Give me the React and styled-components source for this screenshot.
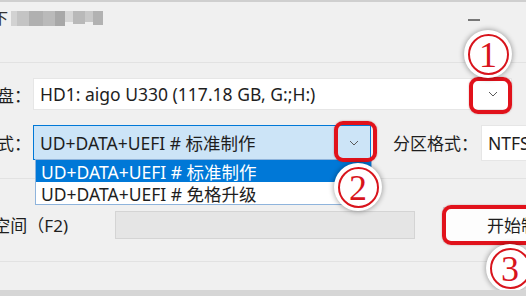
import React from "react";
import styled, { createGlobalStyle } from "styled-components";

const GlobalStyle = createGlobalStyle`
  html, body { margin: 0; padding: 0; background: #f0f0f0; }
  body { font-family: "Noto Sans", "Noto Sans CJK SC", sans-serif; color: #1e1e1e; }
  * { box-sizing: border-box; }
`;

const Window = styled.div`
  position: relative;
  width: 526px;
  height: 296px;
  overflow: hidden;
  background: #f0f0f0;
  border-top: 2px solid #cfcfcf;
  border-bottom: 6px solid #d6d6d6;
  display: flex;
  flex-direction: column;
`;

const TitleBar = styled.div`
  height: 61px;
  flex: none;
  display: flex;
  align-items: flex-start;
  padding-top: 5px;
  border-bottom: 1px solid #e2e2e2;
`;

const TitleText = styled.span`
  font-size: 15px;
  margin-left: -7px;
  color: #333;
`;

const Mosaic = styled.div`
  display: flex;
  align-items: flex-start;
  margin: 4px 0 0 3px;
  filter: blur(0.6px);
`;

const Cell = styled.span`
  width: ${p => p.$w}px;
  height: ${p => p.$h || 15}px;
  background: ${p => p.$c};
`;

const Minimize = styled.span`
  margin: 12px 46px 0 auto;
  width: 12px;
  height: 2px;
  background: #777;
`;

const Section = styled.div`
  padding: ${p => p.$pad};
  border-bottom: 1px solid #e2e2e2;
  display: flex;
  flex-direction: column;
  gap: ${p => p.$gap || 0}px;
`;

const Row = styled.div`
  display: flex;
  align-items: center;
  height: ${p => p.$h}px;
`;

const Label = styled.div`
  width: ${p => p.$w}px;
  flex: none;
  display: flex;
  justify-content: flex-end;
  white-space: nowrap;
  font-size: 17px;
  margin-right: ${p => p.$gap || 2}px;
  margin-left: ${p => p.$left || 0}px;
`;

const Combo = styled.div`
  position: relative;
  flex: none;
  width: ${p => p.$w}px;
  height: ${p => p.$h}px;
  display: flex;
  align-items: center;
  padding-left: 6px;
  font-size: 17.5px;
  white-space: nowrap;
  background: ${p => (p.$active ? "#cce4f7" : "#fff")};
  border: 1px solid ${p => (p.$active ? "#0078d7" : "#e6e6e6")};
`;

const Value = styled.span`
  flex: 1;
  overflow: hidden;
`;

const ChevronBox = styled.span`
  position: relative;
  width: ${p => p.$w}px;
  align-self: stretch;
  display: flex;
  align-items: center;
  justify-content: center;
  flex: none;
`;

const RedFrame = styled.span`
  position: absolute;
  top: ${p => p.$t}px;
  right: ${p => p.$r}px;
  bottom: ${p => p.$b}px;
  left: ${p => p.$l}px;
  border: 4px solid #e1121b;
  border-radius: 9px;
  box-shadow: 0 0 2px rgba(120, 0, 0, 0.35);
  pointer-events: none;
  z-index: 3;
`;

const DropList = styled.div`
  position: absolute;
  top: 100%;
  left: 1px;
  width: 337px;
  background: #fff;
  border: 1px solid #8fb4dc;
  z-index: 2;
`;

const Option = styled.div`
  height: 22px;
  display: flex;
  align-items: center;
  padding-left: 5px;
  font-size: 17.5px;
  background: ${p => (p.$selected ? "#0078d7" : "#fff")};
  color: ${p => (p.$selected ? "#fff" : "#1e1e1e")};
`;

const Disabled = styled.div`
  width: 300px;
  height: 28px;
  flex: none;
  background: #e5e5e5;
  border: 1px solid #d4d4d4;
  margin-right: 28px;
`;

const Button = styled.div`
  position: relative;
  flex: none;
  width: 156px;
  height: 35px;
  display: flex;
  align-items: center;
  justify-content: center;
  font-size: 17px;
  background: #fdfdfd;
  border: 1px solid #d0d0d0;
`;

const Badge = styled.div`
  position: absolute;
  left: ${p => p.$x - 24}px;
  top: ${p => p.$y - 24}px;
  width: 48px;
  height: 48px;
  border-radius: 50%;
  background: #fff;
  box-shadow: 0 0 5px 1px rgba(0, 0, 0, 0.3);
  display: flex;
  align-items: center;
  justify-content: center;
  z-index: 4;
`;

const Ring = styled.span`
  width: 41px;
  height: 41px;
  border-radius: 50%;
  border: 2px solid #d8141c;
  display: flex;
  align-items: center;
  justify-content: center;
  font-family: "Liberation Serif", serif;
  font-size: 36px;
  line-height: 1;
  color: #d8141c;
  padding-top: 2px;
`;

const Chevron = () => (
  <svg width="10" height="6" viewBox="0 0 10 6">
    <polyline points="1,1 5,5 9,1" fill="none" stroke="#5a5a5a" strokeWidth="1" />
  </svg>
);

const mosaic = [
  { w: 6, c: "#d2d2d2" },
  { w: 12, c: "#c4c4c4" },
  { w: 14, c: "#b0b0b0" },
  { w: 12, c: "#bababa" },
  { w: 10, c: "#a8a8a8" },
  { w: 8, c: "#d6d6d6", h: 11 },
  { w: 12, c: "#b9b9b9", h: 13 },
  { w: 8, c: "#c8c8c8", h: 11 },
  { w: 10, c: "#b2b2b2", h: 14 },
];

export default function App() {
  return (
    <>
      <GlobalStyle />
      <Window>
        <TitleBar>
          <TitleText>下</TitleText>
          <Mosaic>
            {mosaic.map((m, i) => (
              <Cell key={i} $w={m.w} $h={m.h} $c={m.c} />
            ))}
          </Mosaic>
          <Minimize />
        </TitleBar>

        <Section $pad="15px 0 17px" $gap={14}>
          <Row $h={32}>
            <Label $w={31}>U盘：</Label>
            <Combo $w={479} $h={32}>
              <Value>HD1: aigo U330 (117.18 GB, G:;H:)</Value>
              <ChevronBox $w={36}>
                <Chevron />
                <RedFrame $t={-2} $r={-1} $b={-5} $l={-6} />
              </ChevronBox>
            </Combo>
          </Row>
          <Row $h={37}>
            <Label $w={31}>模式：</Label>
            <Combo $w={338} $h={35} $active>
              <Value>UD+DATA+UEFI # 标准制作</Value>
              <ChevronBox $w={33}>
                <Chevron />
                <RedFrame $t={-5} $r={-7} $b={-3} $l={-3} />
              </ChevronBox>
              <DropList>
                <Option $selected>UD+DATA+UEFI # 标准制作</Option>
                <Option>UD+DATA+UEFI # 免格升级</Option>
              </DropList>
            </Combo>
            <Label $w={88} $left={19} $gap={3}>分区格式：</Label>
            <Combo $w={80} $h={36}>
              <Value>NTFS</Value>
            </Combo>
          </Row>
        </Section>

        <Section $pad="28px 0 19px">
          <Row $h={35}>
            <Label $w={68} $gap={47}>空间（F2)</Label>
            <Disabled />
            <Button>
              开始制作
              <RedFrame $t={-3} $r={-4} $b={-4} $l={-2} />
            </Button>
          </Row>
        </Section>

        <Badge $x={488} $y={52}><Ring>1</Ring></Badge>
        <Badge $x={358} $y={185}><Ring>2</Ring></Badge>
        <Badge $x={510} $y={266}><Ring>3</Ring></Badge>
      </Window>
    </>
  );
}
